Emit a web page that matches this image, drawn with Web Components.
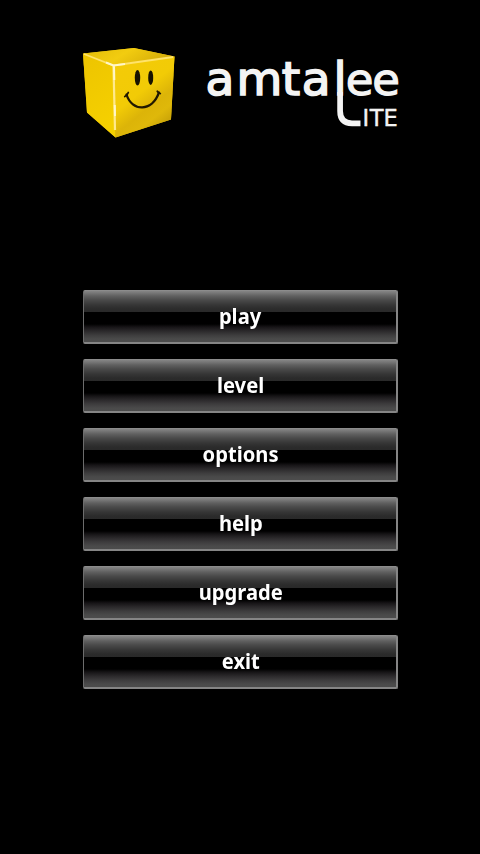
<!DOCTYPE html>
<html lang="en">
<head>
<meta charset="utf-8">
<title>amtalee lite</title>
<style>html,body{margin:0;background:#000}</style>
</head>
<body>
<game-screen>
  <game-logo slot="logo"></game-logo>
  <menu-button>play</menu-button>
  <menu-button>level</menu-button>
  <menu-button>options</menu-button>
  <menu-button>help</menu-button>
  <menu-button>upgrade</menu-button>
  <menu-button>exit</menu-button>
</game-screen>
<script>
class GameScreen extends HTMLElement {
  constructor() {
    super();
    this.attachShadow({mode: 'open'}).innerHTML = `
      <style>
        :host{display:flex;flex-direction:column;box-sizing:border-box;width:480px;height:854px;padding:42px 82px 0 82px;background:#000}
        header{height:248px}
        nav{display:flex;flex-direction:column;gap:15px;padding-left:1px}
      </style>
      <header><slot name="logo"></slot></header>
      <nav><slot></slot></nav>`;
  }
}
class GameLogo extends HTMLElement {
  constructor() {
    super();
    this.attachShadow({mode: 'open'}).innerHTML = `
      <style>
        :host{display:block;width:316px;height:100px}
        svg{display:block;overflow:visible}
        text{font-family:"DejaVu Sans",sans-serif;fill:#f4f4f4;stroke:#f4f4f4}
      </style>
      <svg width="316" height="100" viewBox="82 42 316 100">
        <defs>
          <linearGradient id="front" x1="0" y1="0" x2=".6" y2="1">
            <stop offset="0" stop-color="#f4cb08"/><stop offset=".52" stop-color="#f2cb06"/>
            <stop offset=".72" stop-color="#dcb408"/><stop offset=".85" stop-color="#dfb80a"/><stop offset="1" stop-color="#c8a208"/>
          </linearGradient>
          <linearGradient id="side" x1="0" y1="0" x2=".3" y2="1">
            <stop offset="0" stop-color="#edc400"/><stop offset="1" stop-color="#f5d000"/>
          </linearGradient>
          <linearGradient id="top" x1="0" y1="0" x2="1" y2=".3">
            <stop offset="0" stop-color="#e2bb08"/><stop offset=".5" stop-color="#f2cc10"/><stop offset="1" stop-color="#d5ad08"/>
          </linearGradient>
          <filter id="soft" x="-20%" y="-10%" width="140%" height="120%"><feGaussianBlur stdDeviation=".7"/></filter>
        </defs>
        <path d="M83 53.5L134 48L174.500 56.500L171 119.500L115.500 137.500L87 112.500Z" fill="#dcb606"/>
        <path d="M83 53.500L113.500 65.500L115.500 137.500L87 112.500Z" fill="url(#side)"/>
        <path d="M83 53.500L134 48L174.500 56.500L113.500 65.500Z" fill="url(#top)"/>
        <path d="M113.500 65.500L174.500 56.500L171 119.500L115.500 137.500Z" fill="url(#front)"/>
        <g fill="none" filter="url(#soft)">
          <path d="M84 54L113.500 65.500L173 57" stroke="#ffe36a" stroke-width="1.800"/>
          <path d="M113.500 66L115 130" stroke="#ffe98c" stroke-width="2.200"/>
          <path d="M106 62.500L113.500 65.500L125 64M114 66L114.300 80M114.800 105L115 116" stroke="#fff6c8" stroke-width="2"/>
        </g>
        <g fill="#171200">
          <ellipse cx="137.500" cy="77.700" rx="2.700" ry="7.800"/>
          <ellipse cx="150.700" cy="77.700" rx="2.500" ry="7.300"/>
        </g>
        <g fill="none" stroke="#211900" stroke-linecap="round">
          <path d="M126.500 94.500C132 112 152 112 159 92.500" stroke-width="2.300"/>
          <path d="M124.800 96.500Q127.500 95 128.300 92.500M157.300 91.200Q158.300 93 160.300 93.500" stroke-width="1.800"/>
        </g>
        <text x="205.500 236.500 281.800 301.800 333.600" y="95.200" font-size="47" stroke-width="1.600">amtal<tspan x="345.700 372.200" font-size="45" stroke-width="1.200">ee</tspan></text>
        <path d="M340.100 92V111Q340.100 123.300 352 123.300H360.500" fill="none" stroke="#f4f4f4" stroke-width="5.700"/>
        <text x="362.500 369.800 383.500" y="125.700" font-size="22.500" stroke-width=".4">ITE</text>
      </svg>`;
  }
}
class MenuButton extends HTMLElement {
  constructor() {
    super();
    this.attachShadow({mode: 'open'}).innerHTML = `
      <style>
        :host{display:block;width:315px;height:54px}
        button{display:flex;align-items:center;justify-content:center;box-sizing:border-box;width:100%;height:100%;margin:0;padding:0 0 1px 1px;
          border:solid #858585;border-width:1px 2px 2px 1px;border-top-color:#8c8c8c;border-left-color:#6c6c6c;border-radius:2px;
          background:linear-gradient(#858585 0,#777 2px,#606060 5px,#4a4a4a 9px,#363636 14px,#2b2b2b 18px,#292929 21px,#000 21px,#000 33px,#161416 36px,#2b292b 40px,#3d3c3d 44px,#4a4a4a 48px,#4c4c4c 51px);
          color:#fff;font:bold 21px/28px "Noto Sans","Open Sans",sans-serif}
        span{display:block;transform:scaleX(.96)}
      </style>
      <button type="button"><span><slot></slot></span></button>`;
  }
}
customElements.define('game-screen', GameScreen);
customElements.define('game-logo', GameLogo);
customElements.define('menu-button', MenuButton);
</script>
</body>
</html>
